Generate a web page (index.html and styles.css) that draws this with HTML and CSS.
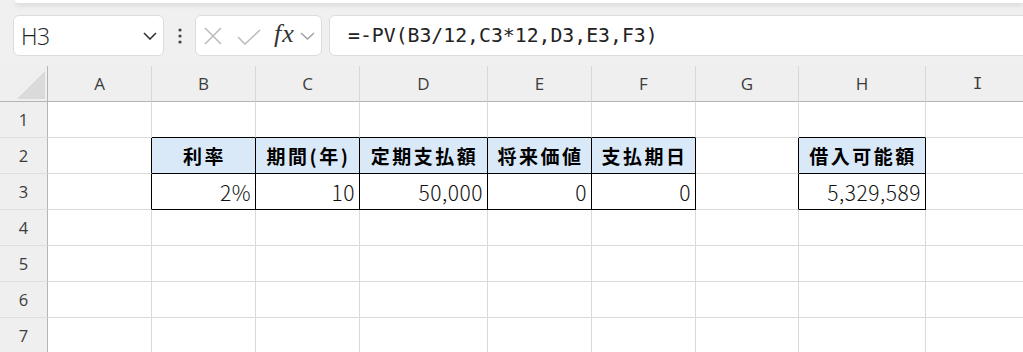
FILE: index.html
```html
<!DOCTYPE html>
<html lang="ja">
<head>
    <meta charset="UTF-8">
    <meta name="viewport" content="width=device-width, initial-scale=1.0">
    <title>借入可能額 - PV</title>
    <link rel="stylesheet" href="styles.css">
</head>
<body>
    <div class="ribbon-edge"></div>

    <div class="formula-bar">
        <div class="name-box">
            <span>H3</span>
            <svg width="14" height="8" viewBox="0 0 14 8"><path d="M1 1l6 6 6-6" fill="none" stroke="#333" stroke-width="1.6"/></svg>
        </div>
        <div class="grip">
            <svg width="4" height="16" viewBox="0 0 4 16"><circle cx="2" cy="2" r="1.6"/><circle cx="2" cy="8" r="1.6"/><circle cx="2" cy="14" r="1.6"/></svg>
        </div>
        <div class="fx-box">
            <svg class="ic-cancel" width="18" height="18" viewBox="0 0 18 18"><path d="M1 1l16 16M17 1L1 17" stroke="#bdbdbd" stroke-width="1.6"/></svg>
            <svg class="ic-enter" width="24" height="16" viewBox="0 0 24 16"><path d="M1 8l7 7L23 1" fill="none" stroke="#bdbdbd" stroke-width="1.6"/></svg>
            <span class="fx">fx</span>
            <svg class="ic-more" width="15" height="8" viewBox="0 0 15 8"><path d="M1 1l6.5 6 6.5-6" fill="none" stroke="#a0a0a0" stroke-width="1.4"/></svg>
        </div>
        <div class="formula">=-PV(B3/12,C3*12,D3,E3,F3)</div>
    </div>

    <div class="sheet">
        <!-- column headers -->
        <div class="corner">
            <svg width="28" height="28" viewBox="0 0 28 28"><polygon points="0,28 28,28 28,0" fill="#dadada"/></svg>
        </div>
        <div class="col-h">A</div>
        <div class="col-h">B</div>
        <div class="col-h">C</div>
        <div class="col-h">D</div>
        <div class="col-h">E</div>
        <div class="col-h">F</div>
        <div class="col-h">G</div>
        <div class="col-h">H</div>
        <div class="col-h serif-i">I</div>

        <!-- row 1 -->
        <div class="row-h">1</div>
        <div class="c"></div>
        <div class="c edge-b"></div>
        <div class="c edge-b"></div>
        <div class="c edge-b"></div>
        <div class="c edge-b"></div>
        <div class="c edge-b"></div>
        <div class="c"></div>
        <div class="c edge-b"></div>
        <div class="c"></div>

        <!-- row 2 -->
        <div class="row-h">2</div>
        <div class="c edge-r"></div>
        <div class="c box head">利率</div>
        <div class="c box head">期間(年)</div>
        <div class="c box head">定期支払額</div>
        <div class="c box head">将来価値</div>
        <div class="c box head">支払期日</div>
        <div class="c edge-r"></div>
        <div class="c box head">借入可能額</div>
        <div class="c"></div>

        <!-- row 3 -->
        <div class="row-h">3</div>
        <div class="c edge-r"></div>
        <div class="c box num">2%</div>
        <div class="c box num">10</div>
        <div class="c box num">50,000</div>
        <div class="c box num">0</div>
        <div class="c box num">0</div>
        <div class="c edge-r"></div>
        <div class="c box num">5,329,589</div>
        <div class="c"></div>

        <!-- rows 4-7 -->
        <div class="row-h">4</div>
        <div class="c"></div><div class="c"></div><div class="c"></div><div class="c"></div><div class="c"></div><div class="c"></div><div class="c"></div><div class="c"></div><div class="c"></div>
        <div class="row-h">5</div>
        <div class="c"></div><div class="c"></div><div class="c"></div><div class="c"></div><div class="c"></div><div class="c"></div><div class="c"></div><div class="c"></div><div class="c"></div>
        <div class="row-h">6</div>
        <div class="c"></div><div class="c"></div><div class="c"></div><div class="c"></div><div class="c"></div><div class="c"></div><div class="c"></div><div class="c"></div><div class="c"></div>
        <div class="row-h">7</div>
        <div class="c"></div><div class="c"></div><div class="c"></div><div class="c"></div><div class="c"></div><div class="c"></div><div class="c"></div><div class="c"></div><div class="c"></div>
    </div>
</body>
</html>
```

FILE: styles.css
```css
:root {
    --chrome: #f0f0f0;
    --header: #efefef;
    --grid: #dadada;
    --header-line: #b5b5b5;
    --head-fill: #dae9f8;
    --text: #1f1f1f;
}

* {
    margin: 0;
    padding: 0;
    box-sizing: border-box;
}

body {
    width: 1023px;
    height: 352px;
    overflow: hidden;
    background: var(--chrome);
    font-family: "Open Sans", "Noto Sans", sans-serif;
    color: var(--text);
}

/* bottom edge of the ribbon */
.ribbon-edge {
    height: 3px;
    margin-left: 15px;
    background: #fff;
    border-radius: 0 0 0 8px;
    box-shadow: 0 2px 5px rgba(0, 0, 0, 0.14);
}

.formula-bar {
    display: flex;
    align-items: center;
    height: 63px;
    padding: 12px 0 10px 13px;
    margin-right: -20px;
}

.name-box,
.fx-box,
.formula {
    height: 41px;
    background: #fff;
    border: 1px solid #dcdcdc;
    border-radius: 6px;
    display: flex;
    align-items: center;
}

.name-box {
    width: 151px;
    justify-content: space-between;
    padding: 0 6px 0 7px;
}

.name-box span {
    font-size: 23px;
    font-weight: 300;
    color: #222;
    letter-spacing: -0.5px;
}

.grip {
    width: 31px;
    display: flex;
    justify-content: center;
    fill: #444;
}

.fx-box {
    width: 127px;
    padding-left: 8px;
}

.ic-enter {
    margin-left: 15px;
    margin-top: 2px;
}

.fx {
    margin-left: 13px;
    font-family: "Liberation Serif", "DejaVu Serif", serif;
    font-style: italic;
    font-size: 26px;
    color: #333;
    line-height: 1;
    margin-top: -3px;
    letter-spacing: 1px;
}

.ic-more {
    margin-left: 5px;
}

.formula {
    flex: 1;
    margin-left: 7px;
    padding-left: 18px;
    font-family: "DejaVu Sans Mono", "Liberation Mono", monospace;
    font-size: 19.8px;
    color: #222;
    border-radius: 6px 0 0 6px;
}

/* worksheet grid */
.sheet {
    display: grid;
    grid-template-columns: 48px 104px 104px 104px 128px 104px 104px 103px 127px 104px;
    grid-auto-rows: 36px;
    background: #fff;
}

.corner {
    background: var(--header);
    border-right: 1px solid var(--header-line);
    border-bottom: 1px solid var(--header-line);
    display: flex;
    align-items: flex-end;
    justify-content: flex-end;
    padding: 0 2px 2px 0;
}

.col-h {
    background: var(--header);
    border-right: 1px solid #d8d8d8;
    border-bottom: 1px solid var(--header-line);
    display: flex;
    align-items: center;
    justify-content: center;
    font-size: 17px;
    color: #3c3c3c;
}

.col-h.serif-i {
    font-family: "DejaVu Sans Mono", monospace;
    font-size: 16px;
}

.row-h {
    background: var(--header);
    border-right: 1px solid var(--header-line);
    border-bottom: 1px solid #dedede;
    display: flex;
    align-items: center;
    justify-content: center;
    font-size: 16.5px;
    color: #3c3c3c;
    padding-bottom: 1px;
}

.c {
    border-right: 1px solid var(--grid);
    border-bottom: 1px solid var(--grid);
    display: flex;
    align-items: center;
    font-family: "Noto Sans CJK JP", "Noto Sans", sans-serif;
    color: #000;
}

.c.edge-r {
    border-right-color: #000;
}

.c.edge-b {
    border-bottom-color: #000;
}

.c.box {
    border-right-color: #000;
    border-bottom-color: #000;
}

.head {
    background: var(--head-fill);
    justify-content: center;
    font-size: 19px;
    font-weight: 700;
    letter-spacing: 2.5px;
    padding-left: 2px;
}

.num {
    justify-content: flex-end;
    padding-right: 4px;
    font-size: 21px;
    font-weight: 300;
    letter-spacing: 0.5px;
    color: #111;
}
```
